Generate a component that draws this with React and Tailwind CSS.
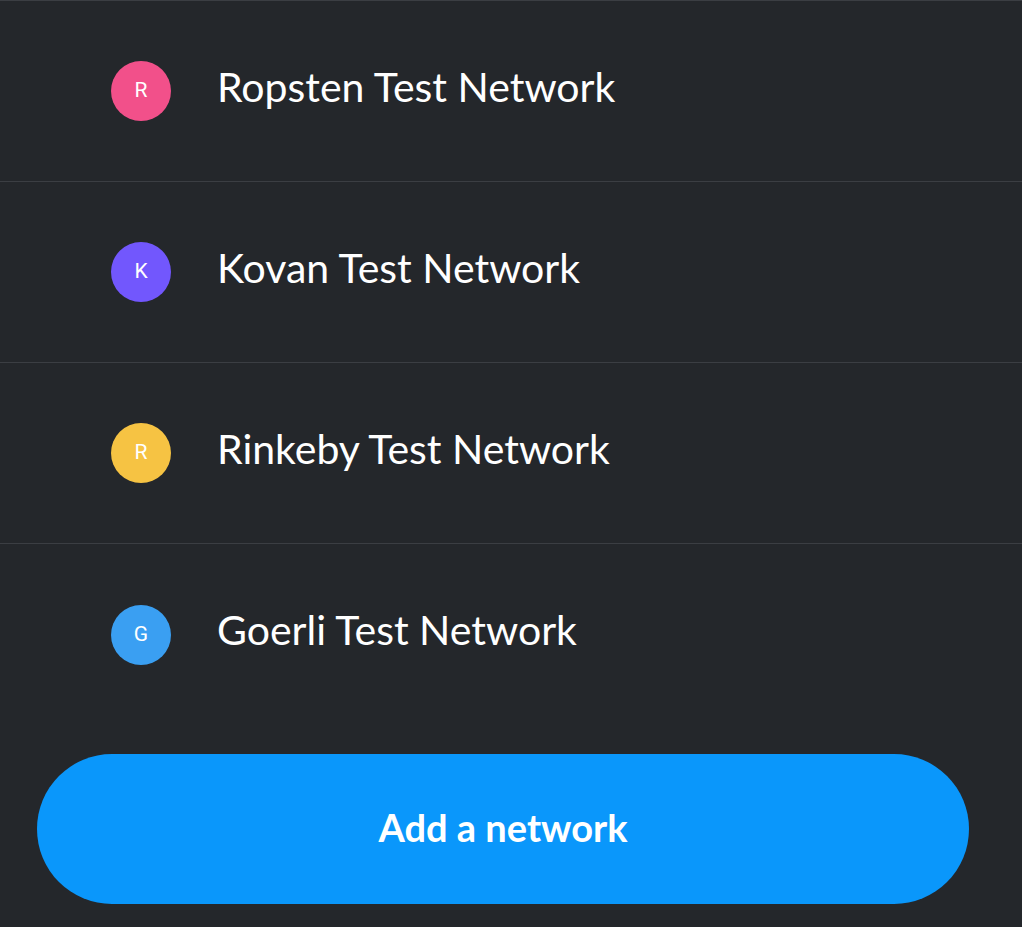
const networks = [
  { name: 'Ropsten Test Network', letter: 'R', color: 'bg-[#f2508a]' },
  { name: 'Kovan Test Network', letter: 'K', color: 'bg-[#7257fd]' },
  { name: 'Rinkeby Test Network', letter: 'R', color: 'bg-[#f6c343]' },
  { name: 'Goerli Test Network', letter: 'G', color: 'bg-[#3a9ff2]' },
];

export default function App() {
  return (
    <div className="w-[1022px] h-[927px] bg-[#24272b] overflow-hidden font-['Lato',sans-serif]">
      <div className="border-t border-[#3b3e43]">
        {networks.map((net, i) => (
          <div
            key={net.name}
            className={`h-[181px] flex items-center pl-[111px] ${i < networks.length - 1 ? 'border-b border-[#3b3e43]' : ''}`}
          >
            <div className={`w-[60px] h-[60px] rounded-full ${net.color} flex items-center justify-center text-white text-[21px] font-['Roboto',sans-serif]`}>
              {net.letter}
            </div>
            <span className="ml-[46px] mb-[10px] text-white text-[41px] leading-none">{net.name}</span>
          </div>
        ))}
      </div>
      <button className="mt-[29px] ml-[37px] w-[932px] h-[150px] rounded-full bg-[#0a97fb] text-white text-[38px] font-bold flex items-center justify-center pb-[4px]">
        Add a network
      </button>
    </div>
  );
}
